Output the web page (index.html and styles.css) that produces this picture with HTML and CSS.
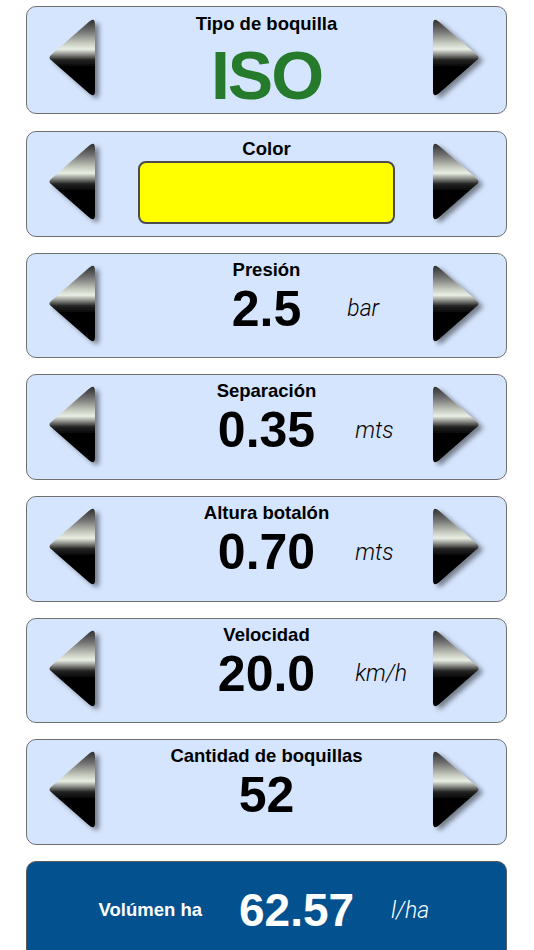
FILE: index.html
```html
<!DOCTYPE html>
<html lang="es">
<head>
<meta charset="utf-8">
<title>Boquillas</title>
<link rel="stylesheet" href="styles.css">
</head>
<body>
<svg class="defs" width="0" height="0" aria-hidden="true">
  <defs>
    <linearGradient id="metal" x1="0" y1="0" x2="0" y2="1">
      <stop offset="0" stop-color="#303030"/>
      <stop offset="0.15" stop-color="#707070"/>
      <stop offset="0.31" stop-color="#c6cabe"/>
      <stop offset="0.39" stop-color="#e9efe4"/>
      <stop offset="0.46" stop-color="#8c8e88"/>
      <stop offset="0.53" stop-color="#262626"/>
      <stop offset="0.62" stop-color="#050505"/>
      <stop offset="1" stop-color="#000"/>
    </linearGradient>
    <filter id="shadow" x="-30%" y="-20%" width="160%" height="150%">
      <feDropShadow dx="4" dy="3" stdDeviation="2.4" flood-color="#000" flood-opacity="0.45"/>
    </filter>
    <path id="la" d="M3,38.4 L41,5.3 Q47,0 47,8 L47,74 Q47,82 41,76.7 L3,43.6 Q0,41 3,38.4 Z"/>
    <path id="ra" d="M44,38.4 L6,5.3 Q0,0 0,8 L0,74 Q0,82 6,76.7 L44,43.6 Q47,41 44,38.4 Z"/>
  </defs>
</svg>

<main class="screen">
  <section class="card first">
    <div class="arrow-col left"><svg class="arrow" viewBox="0 0 60 92"><use href="#la" x="1" y="2.5" fill="url(#metal)" filter="url(#shadow)"/></svg></div>
    <div class="center center-first">
      <div class="title">Tipo de boquilla</div>
      <div class="iso">ISO</div>
    </div>
    <div class="arrow-col right"><svg class="arrow" viewBox="0 0 60 92"><use href="#ra" x="1" y="2.5" fill="url(#metal)" filter="url(#shadow)"/></svg></div>
  </section>

  <section class="card">
    <div class="arrow-col left"><svg class="arrow" viewBox="0 0 60 92"><use href="#la" x="1" y="2.5" fill="url(#metal)" filter="url(#shadow)"/></svg></div>
    <div class="center center-color">
      <div class="title">Color</div>
      <div class="swatch"></div>
    </div>
    <div class="arrow-col right"><svg class="arrow" viewBox="0 0 60 92"><use href="#ra" x="1" y="2.5" fill="url(#metal)" filter="url(#shadow)"/></svg></div>
  </section>

  <section class="card">
    <div class="arrow-col left"><svg class="arrow" viewBox="0 0 60 92"><use href="#la" x="1" y="2.5" fill="url(#metal)" filter="url(#shadow)"/></svg></div>
    <div class="center">
      <div class="title">Presión</div>
      <div class="value-row"><span class="value">2.5</span><span class="unit unit-bar">bar</span></div>
    </div>
    <div class="arrow-col right"><svg class="arrow" viewBox="0 0 60 92"><use href="#ra" x="1" y="2.5" fill="url(#metal)" filter="url(#shadow)"/></svg></div>
  </section>

  <section class="card">
    <div class="arrow-col left"><svg class="arrow" viewBox="0 0 60 92"><use href="#la" x="1" y="2.5" fill="url(#metal)" filter="url(#shadow)"/></svg></div>
    <div class="center">
      <div class="title">Separación</div>
      <div class="value-row"><span class="value">0.35</span><span class="unit">mts</span></div>
    </div>
    <div class="arrow-col right"><svg class="arrow" viewBox="0 0 60 92"><use href="#ra" x="1" y="2.5" fill="url(#metal)" filter="url(#shadow)"/></svg></div>
  </section>

  <section class="card">
    <div class="arrow-col left"><svg class="arrow" viewBox="0 0 60 92"><use href="#la" x="1" y="2.5" fill="url(#metal)" filter="url(#shadow)"/></svg></div>
    <div class="center">
      <div class="title">Altura botalón</div>
      <div class="value-row"><span class="value">0.70</span><span class="unit">mts</span></div>
    </div>
    <div class="arrow-col right"><svg class="arrow" viewBox="0 0 60 92"><use href="#ra" x="1" y="2.5" fill="url(#metal)" filter="url(#shadow)"/></svg></div>
  </section>

  <section class="card">
    <div class="arrow-col left"><svg class="arrow" viewBox="0 0 60 92"><use href="#la" x="1" y="2.5" fill="url(#metal)" filter="url(#shadow)"/></svg></div>
    <div class="center">
      <div class="title">Velocidad</div>
      <div class="value-row"><span class="value">20.0</span><span class="unit">km/h</span></div>
    </div>
    <div class="arrow-col right"><svg class="arrow" viewBox="0 0 60 92"><use href="#ra" x="1" y="2.5" fill="url(#metal)" filter="url(#shadow)"/></svg></div>
  </section>

  <section class="card">
    <div class="arrow-col left"><svg class="arrow" viewBox="0 0 60 92"><use href="#la" x="1" y="2.5" fill="url(#metal)" filter="url(#shadow)"/></svg></div>
    <div class="center">
      <div class="title">Cantidad de boquillas</div>
      <div class="value-row"><span class="value">52</span></div>
    </div>
    <div class="arrow-col right"><svg class="arrow" viewBox="0 0 60 92"><use href="#ra" x="1" y="2.5" fill="url(#metal)" filter="url(#shadow)"/></svg></div>
  </section>

  <section class="total">
    <span class="total-label">Volúmen ha</span>
    <span class="total-value">62.57</span>
    <span class="total-unit">l/ha</span>
  </section>
</main>
</body>
</html>
```

FILE: styles.css
```css
html, body {
  margin: 0;
  padding: 0;
  background: #ffffff;
}

body {
  font-family: "Liberation Sans", Arial, sans-serif;
  color: #000;
}

.defs {
  position: absolute;
  width: 0;
  height: 0;
  overflow: hidden;
}

.screen {
  box-sizing: border-box;
  height: 950px;
  overflow: hidden;
  padding: 6px 27px 0 26px;
  display: flex;
  flex-direction: column;
  gap: 16px;
}

.card {
  box-sizing: border-box;
  flex: none;
  height: 105.7px;
  border: 1.5px solid #707070;
  border-radius: 10px;
  background: #d5e5fe;
  display: flex;
  align-items: center;
}

.card.first {
  height: 108px;
  margin-bottom: 1px;
}

.arrow-col {
  box-sizing: border-box;
  flex: none;
  width: 90px;
  display: flex;
  align-items: center;
}

.arrow-col.left {
  padding-left: 19.5px;
}

.arrow-col.right {
  padding-left: 15.5px;
}

.arrow {
  display: block;
  width: 60px;
  height: 92px;
  overflow: visible;
}

.center {
  flex: 1;
  align-self: stretch;
  display: flex;
  flex-direction: column;
  align-items: center;
  padding-top: 5px;
  min-width: 0;
}

.center-first {
  padding-top: 6.4px;
}

.center-color {
  padding-top: 5.5px;
}

.title {
  font-size: 18.5px;
  font-weight: bold;
  line-height: 22px;
  white-space: nowrap;
}

.iso {
  margin-top: 6px;
  font-size: 68px;
  line-height: 68px;
  font-weight: bold;
  color: #267a2c;
  letter-spacing: -2px;
}

.swatch {
  box-sizing: border-box;
  margin-top: 1px;
  width: 257px;
  height: 63px;
  background: #ffff00;
  border: 2px solid #4c4c4c;
  border-radius: 8px;
}

.value-row {
  margin-top: 3px;
  width: 100%;
  display: grid;
  grid-template-columns: 1fr auto 1fr;
  align-items: center;
}

.value {
  grid-column: 2;
  font-size: 50px;
  line-height: 50px;
  font-weight: bold;
}

.unit {
  grid-column: 3;
  padding-left: 40px;
  font-family: Roboto, "Liberation Sans", sans-serif;
  font-style: italic;
  font-weight: 300;
  font-size: 23px;
  white-space: nowrap;
}

.unit-bar {
  padding-left: 46px;
}

.total {
  box-sizing: border-box;
  flex: none;
  height: 110px;
  background: #03528f;
  border: 1px solid #5c5c5c;
  border-radius: 10px;
  color: #ffffff;
  display: flex;
  align-items: center;
  align-self: stretch;
  padding: 0 0 12px 71.5px;
}

.total-label {
  font-size: 18.5px;
  font-weight: bold;
}

.total-value {
  margin-left: 37px;
  font-size: 46px;
  line-height: 46px;
  font-weight: bold;
}

.total-unit {
  margin-left: 37px;
  font-family: Roboto, "Liberation Sans", sans-serif;
  font-style: italic;
  font-weight: 300;
  font-size: 23px;
}
```
